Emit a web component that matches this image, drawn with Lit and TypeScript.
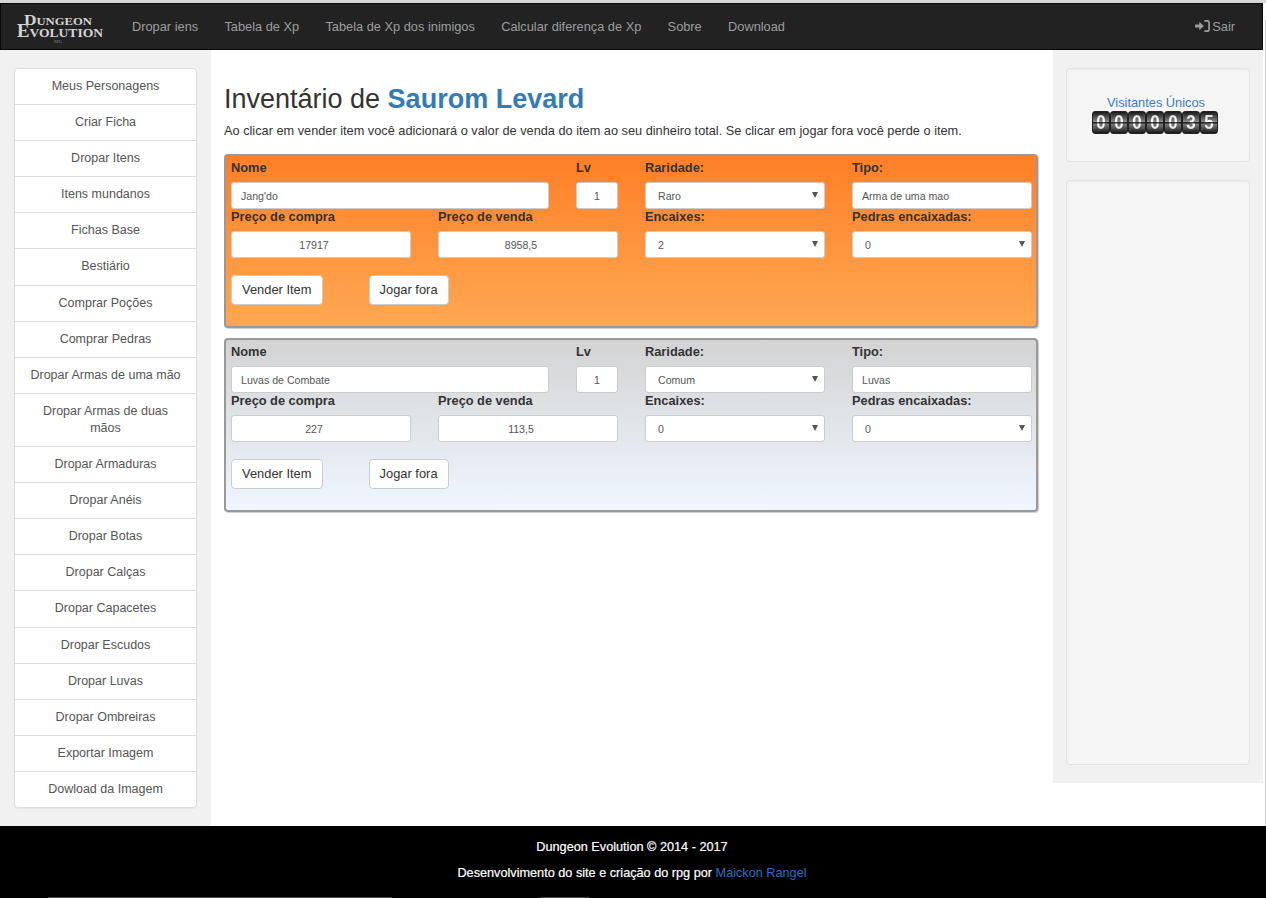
import { LitElement, html, css } from 'lit';
import { customElement } from 'lit/decorators.js';

const NAV = ['Dropar iens', 'Tabela de Xp', 'Tabela de Xp dos inimigos', 'Calcular diferença de Xp', 'Sobre', 'Download'];
const MENU = [
  'Meus Personagens', 'Criar Ficha', 'Dropar Itens', 'Itens mundanos', 'Fichas Base', 'Bestiário',
  'Comprar Poções', 'Comprar Pedras', 'Dropar Armas de uma mão', 'Dropar Armas de duas mãos',
  'Dropar Armaduras', 'Dropar Anéis', 'Dropar Botas', 'Dropar Calças', 'Dropar Capacetes',
  'Dropar Escudos', 'Dropar Luvas', 'Dropar Ombreiras', 'Exportar Imagem', 'Dowload da Imagem',
];
const ITEMS = [
  { cls: 'rare', nome: "Jang'do", raridade: 'Raro', tipo: 'Arma de uma mao', compra: '17917', venda: '8958,5', encaixes: '2' },
  { cls: 'common', nome: 'Luvas de Combate', raridade: 'Comum', tipo: 'Luvas', compra: '227', venda: '113,5', encaixes: '0' },
];

@customElement('app-root')
export class AppRoot extends LitElement {
  static styles = css`
    :host {
      display: block;
      position: relative;
      font-family: 'Liberation Sans', Arial, sans-serif;
      font-size: 13px;
      color: #333;
      background: #fff;
      height: 898px;
      overflow: hidden;
    }
    .top { height: 3px; background: #d8d8d8; }
    .edge { position: absolute; left: 1265px; top: 20px; width: 1px; height: 806px; background: #ccc; }
    .navbar {
      display: flex;
      align-items: center;
      height: 47px;
      width: 1263px;
      box-sizing: border-box;
      background: #222;
      border: 1px solid #080808;
      padding-bottom: 1px;
    }
    .logo { width: 90px; height: 45px; margin-left: 13px; flex: none; align-self: flex-start; }
    .logo text { font-family: 'Liberation Serif', serif; fill: #d4d4d4; }
    .logo .sc { font-variant: small-caps; font-size: 15px; font-weight: 700; }
    .logo .rpg { font-size: 5px; fill: #888; }
    .navbar a { color: #9d9d9d; font-size: 12.8px; }
    .links { display: flex; margin-left: 28px; gap: 26.3px; }
    .logout { margin-left: auto; margin-right: 27px; display: flex; align-items: center; gap: 2px; }
    .logout svg { width: 15px; height: 12px; fill: #9d9d9d; }
    .body { display: flex; height: 776px; }
    .sidebar { width: 211px; flex: none; background: #f1f1f1; box-sizing: border-box; padding: 18px 14px 0; }
    .list {
      background: #fff;
      border: 1px solid #ddd;
      border-radius: 4px;
      box-shadow: 0 1px 1px rgba(0, 0, 0, .05);
      width: 183px;
      box-sizing: border-box;
    }
    .list a {
      display: block;
      padding: 9px 15px;
      line-height: 17.1px;
      font-size: 12.5px;
      text-align: center;
      color: #555;
      border-top: 1px solid #ddd;
      box-sizing: border-box;
    }
    .list a:first-child { border-top: none; }
    .main { width: 842px; flex: none; box-sizing: border-box; padding: 0 13px; }
    h2 { font-size: 27px; font-weight: 400; line-height: 30px; margin: 34px 0 0; color: #333; }
    h2 b { color: #337ab7; }
    .lead { margin: 8px 0 0; font-size: 12.75px; line-height: 17px; height: 17px; white-space: nowrap; }
    .item {
      box-sizing: border-box;
      width: 814px;
      height: 174px;
      border: 2px solid #999;
      border-radius: 4px;
      padding: 4px 5px;
      margin-top: 10px;
      box-shadow: 1px 1px 1px rgba(0, 0, 0, .2);
    }
    .lead + .item { margin-top: 15px; }
    .rare { background: linear-gradient(#ff7f27, #ffa851); }
    .common { background: linear-gradient(#d3d3d3, #eff6ff); }
    .fields { display: grid; grid-template-columns: 180px 111px 42px 180px 180px; column-gap: 27px; }
    .fields label { font-weight: 700; font-size: 12.8px; line-height: 15px; padding-bottom: 7px; display: block; }
    .wide { grid-column: span 2; }
    .fields input, .select {
      box-sizing: border-box;
      display: block;
      width: 100%;
      height: 27px;
      background: #fff;
      border: 1px solid #ccc;
      border-radius: 3px;
      font: 10.6px 'Liberation Sans', Arial, sans-serif;
      color: #555;
      padding: 0 9px;
      margin: 0;
    }
    .fields .center { text-align: center; }
    .fields .num { padding-right: 23px; }
    .select { padding-left: 12px; position: relative; line-height: 27px; }
    .select::after {
      content: '';
      position: absolute;
      right: 6px;
      top: 9px;
      border-left: 3px solid transparent;
      border-right: 3px solid transparent;
      border-top: 6px solid #555;
    }
    .buttons { display: flex; gap: 46px; margin-top: 17px; }
    button {
      height: 30px;
      background: #fff;
      border: 1px solid #ccc;
      border-radius: 4px;
      font: 12.9px 'Liberation Sans', Arial, sans-serif;
      color: #333;
      padding: 0 10px 2px;
    }
    .aside { width: 210px; flex: none; height: 733px; background: #f1f1f1; box-sizing: border-box; padding: 18px 13px 0; }
    .well {
      background: #f5f5f5;
      border: 1px solid #e3e3e3;
      border-radius: 4px;
      box-shadow: inset 0 1px 1px rgba(0, 0, 0, .05);
      box-sizing: border-box;
    }
    .visitors { height: 94px; text-align: center; padding: 25px 4px 0 0; line-height: 17px; }
    .visitors a { color: #3a7cc5; font-size: 12.8px; }
    .counter { display: flex; justify-content: center; margin-right: 2px; }
    .digit {
      width: 18px;
      height: 23px;
      box-sizing: border-box;
      border-radius: 3px;
      overflow: hidden;
      border: 1px solid #222;
      background: linear-gradient(#1a1a1a, #777 40%, #999 48%, #222 50%, #777 60%, #1a1a1a);
    }
    .digit span {
      display: block;
      text-align: center;
      font: 700 20px/21px 'Liberation Sans', Arial, sans-serif;
      transform: scaleX(.85);
      color: transparent;
      background: linear-gradient(#bbb, #fff 35%, #fff 47%, #444 50%, #fff 60%, #bbb);
      -webkit-background-clip: text;
      background-clip: text;
    }
    .ads { height: 585px; margin-top: 18px; }
    .footer {
      height: 72px;
      background: #000;
      color: #fff;
      text-align: center;
      font-size: 12.7px;
      padding: 13px 2px 0 0;
      box-sizing: border-box;
      line-height: 17px;
      position: relative;
      -webkit-text-stroke: .2px #fff;
    }
    .footer p { margin: 0 0 9px; }
    .footer a { color: #2a6fc9; -webkit-text-stroke: 0; }
    .rule { position: absolute; bottom: 0; height: 1px; background: #444; }
    .r1 { left: 48px; width: 344px; }
    .r2 { left: 541px; width: 48px; }
  `;

  renderItem(it: (typeof ITEMS)[number]) {
    return html`<div class="item ${it.cls}">
      <div class="fields">
        <div class="wide"><label>Nome</label><input value=${it.nome} /></div>
        <div><label>Lv</label><input class="center" value="1" /></div>
        <div><label>Raridade:</label><div class="select">${it.raridade}</div></div>
        <div><label>Tipo:</label><input value=${it.tipo} /></div>
        <div><label>Preço de compra</label><input class="center num" value=${it.compra} /></div>
        <div class="wide"><label>Preço de venda</label><input class="center num" value=${it.venda} /></div>
        <div><label>Encaixes:</label><div class="select">${it.encaixes}</div></div>
        <div><label>Pedras encaixadas:</label><div class="select">0</div></div>
      </div>
      <div class="buttons"><button>Vender Item</button><button>Jogar fora</button></div>
    </div>`;
  }

  render() {
    return html`
      <div class="top"></div>
      <nav class="navbar">
        <svg class="logo" viewBox="0 0 90 45">
          <text class="sc" x="10" y="21" textLength="68" lengthAdjust="spacingAndGlyphs">Dungeon</text>
          <text class="sc" x="3" y="33" textLength="86" lengthAdjust="spacingAndGlyphs" style="font-size:18px">Evolution</text>
          <text class="rpg" x="40" y="38.500" textLength="8" lengthAdjust="spacingAndGlyphs">RPG</text>
        </svg>
        <div class="links">${NAV.map((n) => html`<a>${n}</a>`)}</div>
        <a class="logout">
          <svg viewBox="0 0 16 13"><path d="M0 5h4.500V2l5 4.500-5 4.500V8H0zM10 0h3.500A2.500 2.500 0 0 1 16 2.500v8a2.500 2.500 0 0 1-2.500 2.500H10v-1.800h3a1.200 1.200 0 0 0 1.200-1.200V3a1.200 1.200 0 0 0-1.200-1.200h-3z"/></svg>
          Sair
        </a>
      </nav>
      <div class="body">
        <aside class="sidebar"><div class="list">${MENU.map((m) => html`<a>${m}</a>`)}</div></aside>
        <main class="main">
          <h2>Inventário de <b>Saurom Levard</b></h2>
          <p class="lead">Ao clicar em vender item você adicionará o valor de venda do item ao seu dinheiro total. Se clicar em jogar fora você perde o item.</p>
          ${ITEMS.map((it) => this.renderItem(it))}
        </main>
        <aside class="aside">
          <div class="well visitors">
            <a>Visitantes Únicos</a>
            <div class="counter">${'0000035'.split('').map((d) => html`<div class="digit"><span>${d}</span></div>`)}</div>
          </div>
          <div class="well ads"></div>
        </aside>
      </div>
      <footer class="footer">
        <p>Dungeon Evolution © 2014 - 2017</p>
        <p>Desenvolvimento do site e criação do rpg por <a>Maickon Rangel</a></p>
        <div class="rule r1"></div>
        <div class="rule r2"></div>
      </footer>
      <div class="edge"></div>
    `;
  }
}
